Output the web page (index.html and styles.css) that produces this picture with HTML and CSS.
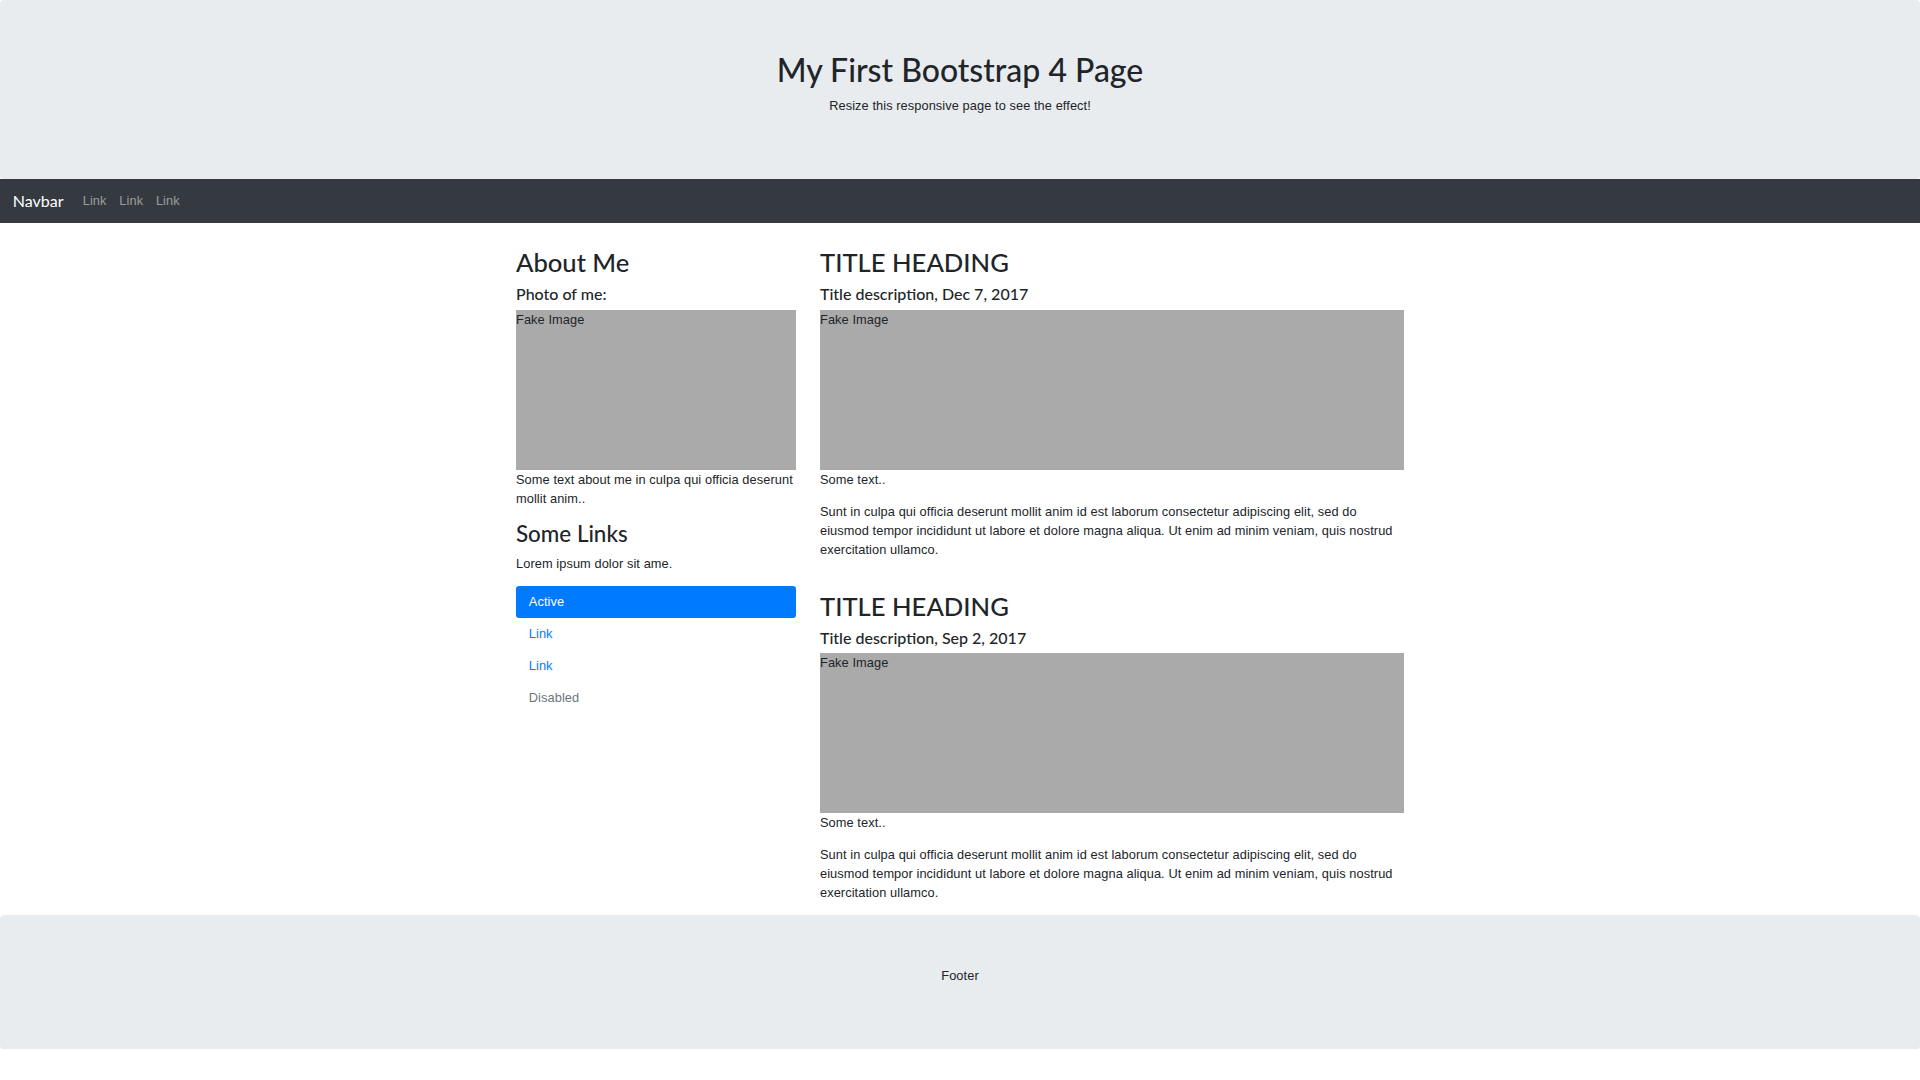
FILE: index.html
```html
<!DOCTYPE html>
<html lang="en">
<head>
    <meta charset="UTF-8">
    <meta name="viewport" content="width=device-width, initial-scale=1.0">
    <title>Bootstrap 4 Example</title>
    <link rel="stylesheet" href="styles.css">
</head>
<body>

    <div class="jumbotron">
        <h1>My First Bootstrap 4 Page</h1>
        <p>Resize this responsive page to see the effect!</p>
    </div>

    <nav class="navbar">
        <a class="navbar-brand" href="#">Navbar</a>
        <ul class="navbar-nav">
            <li><a class="nav-link" href="#">Link</a></li>
            <li><a class="nav-link" href="#">Link</a></li>
            <li><a class="nav-link" href="#">Link</a></li>
        </ul>
    </nav>

    <div class="container">
        <div class="row">
            <div class="col-side">
                <h2>About Me</h2>
                <h5>Photo of me:</h5>
                <div class="fakeimg">Fake Image</div>
                <p>Some text about me in culpa qui officia deserunt mollit anim..</p>
                <h3>Some Links</h3>
                <p>Lorem ipsum dolor sit ame.</p>
                <ul class="nav-pills">
                    <li><a class="pill active" href="#">Active</a></li>
                    <li><a class="pill" href="#">Link</a></li>
                    <li><a class="pill" href="#">Link</a></li>
                    <li><a class="pill disabled" href="#">Disabled</a></li>
                </ul>
            </div>
            <div class="col-main">
                <h2>TITLE HEADING</h2>
                <h5>Title description, Dec 7, 2017</h5>
                <div class="fakeimg">Fake Image</div>
                <p>Some text..</p>
                <p>Sunt in culpa qui officia deserunt mollit anim id est laborum consectetur adipiscing elit, sed do eiusmod tempor incididunt ut labore et dolore magna aliqua. Ut enim ad minim veniam, quis nostrud exercitation ullamco.</p>
                <br>
                <h2>TITLE HEADING</h2>
                <h5>Title description, Sep 2, 2017</h5>
                <div class="fakeimg">Fake Image</div>
                <p>Some text..</p>
                <p>Sunt in culpa qui officia deserunt mollit anim id est laborum consectetur adipiscing elit, sed do eiusmod tempor incididunt ut labore et dolore magna aliqua. Ut enim ad minim veniam, quis nostrud exercitation ullamco.</p>
            </div>
        </div>
    </div>

    <div class="jumbotron">
        <p>Footer</p>
    </div>

</body>
</html>
```

FILE: styles.css
```css
* {
    box-sizing: border-box;
}

body {
    margin: 0;
    font-family: "Liberation Sans", Arial, sans-serif;
    font-size: 12.8px;
    line-height: 19px;
    letter-spacing: 0.08px;
    color: #212529;
    background-color: #fff;
}

h1, h2, h3, h5 {
    margin: 0 0 6.4px;
    font-family: Lato, "Liberation Sans", sans-serif;
    font-weight: 500;
    line-height: 1.2;
    letter-spacing: 0;
}

h1 { font-size: 32px; margin-bottom: 6px; }
h2 { font-size: 25.6px; }
h3 { font-size: 22.4px; }
h5 { font-size: 16px; }

p {
    margin: 0 0 12.8px;
}

a {
    text-decoration: none;
}

ul {
    list-style: none;
    margin: 0;
    padding: 0;
}

.jumbotron {
    padding: 51.2px 25.6px;
    background-color: #e9ecef;
    border-radius: 3.84px;
    text-align: center;
}

.navbar {
    display: flex;
    align-items: center;
    padding: 6.4px 12.8px;
    background-color: #343a40;
}

.navbar-brand {
    padding: 4px 0;
    margin-right: 12.8px;
    font-family: Lato, "Liberation Sans", sans-serif;
    font-size: 16px;
    line-height: 24px;
    letter-spacing: 0;
    color: #fff;
}

.navbar-nav {
    display: flex;
}

.nav-link {
    display: block;
    padding: 6.4px;
    color: rgba(255, 255, 255, 0.5);
}

.container {
    width: 912px;
    margin: 24px auto 0;
    padding: 0 12px;
}

.row {
    display: flex;
    margin: 0 -12px;
}

.col-side {
    width: 33.3333%;
    padding: 0 12px;
}

.col-main {
    width: 66.6667%;
    padding: 0 12px;
}

.fakeimg {
    height: 160px;
    background: #aaa;
}

.pill {
    display: block;
    padding: 6.4px 12.8px;
    border-radius: 3.2px;
    color: #007bff;
}

.pill.active {
    background-color: #007bff;
    color: #fff;
}

.pill.disabled {
    color: #6c757d;
}
```
